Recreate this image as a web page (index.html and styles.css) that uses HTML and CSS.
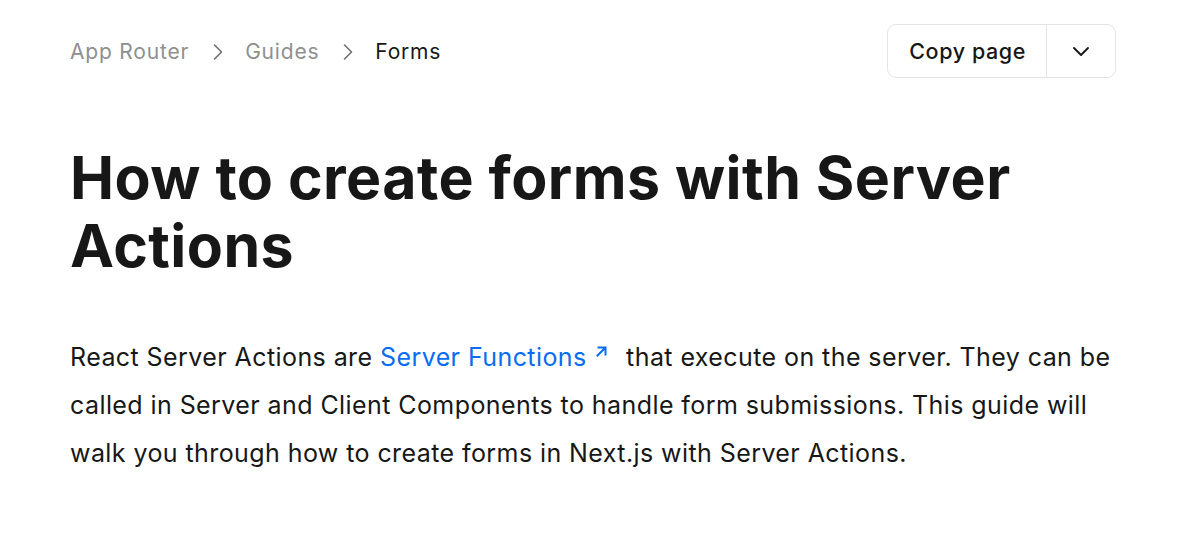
FILE: index.html
```html
<!DOCTYPE html>
<html>
<head>
<meta charset="utf-8">
<link rel="stylesheet" href="styles.css">
</head>
<body>
<main class="page">
  <header class="topbar">
    <nav class="crumbs">
      <span class="crumb">App Router</span>
      <svg class="sep" width="16" height="18" viewBox="0 0 16 18"><path d="M3.5 2 L10.5 9 L3.5 16" fill="none" stroke="#707070" stroke-width="1.6" stroke-linecap="round" stroke-linejoin="round"/></svg>
      <span class="crumb">Guides</span>
      <svg class="sep" width="16" height="18" viewBox="0 0 16 18"><path d="M3.5 2 L10.5 9 L3.5 16" fill="none" stroke="#707070" stroke-width="1.6" stroke-linecap="round" stroke-linejoin="round"/></svg>
      <span class="crumb current">Forms</span>
    </nav>
    <div class="copy">
      <button class="copy-main">Copy page</button>
      <button class="copy-more"><svg width="22" height="22" viewBox="0 0 22 22"><path d="M4 8 L11 15 L18 8" fill="none" stroke="#171717" stroke-width="1.9" stroke-linecap="round" stroke-linejoin="round"/></svg></button>
    </div>
  </header>
  <h1 class="title">How to create forms with Server Actions</h1>
  <p class="lead">React Server Actions are <a class="link" href="#">Server Functions<svg class="ext" width="13" height="13" viewBox="0 0 13 13"><path d="M2.5 10.5 L10 3 M3.5 2.5 H10.5 V9.5" fill="none" stroke="#0a6cf0" stroke-width="2" stroke-linecap="square" stroke-linejoin="miter"/></svg></a> that execute on the server. They can be called in Server and Client Components to handle form submissions. This guide will walk you through how to create forms in Next.js with Server Actions.</p>
</main>
</body>
</html>
```
FILE: styles.css
```css
* { box-sizing: border-box; }
html, body { margin: 0; padding: 0; background: #fff; }
body { font-family: Inter, "Noto Sans", sans-serif; color: #171717; }
.page { width: 1046px; margin-left: 70px; padding-top: 24px; }
.topbar { display: flex; justify-content: space-between; align-items: center; height: 54px; }
.crumbs { display: flex; align-items: center; font-size: 21px; letter-spacing: 0.8px; padding-top: 1px; }
.crumb { color: #8f8f8f; }
.crumb.current { color: #171717; }
.sep { margin: 0 18px 0 22px; }
.copy { display: flex; border: 1px solid #e4e4e4; border-radius: 9px; height: 54px; }
.copy button { background: none; border: none; font-family: inherit; color: #171717; cursor: pointer; padding: 0; }
.copy-main { font-size: 21.5px; font-weight: 500; letter-spacing: 0.6px; padding: 0 20px 0 21px !important; border-right: 1px solid #e4e4e4 !important; }
.copy-more { width: 68px; display: flex; align-items: center; justify-content: center; }
.title { margin: 66px 0 0; font-size: 59px; line-height: 68px; font-weight: 700; letter-spacing: 0.45px; }
.lead { margin: 53px -4px 0 0; font-size: 25px; line-height: 48px; letter-spacing: 0.42px; color: #171717; }
.link { color: #0a6cf0; text-decoration: none; }
.ext { margin-left: 8px; margin-right: 11px; vertical-align: 8px; }
```
